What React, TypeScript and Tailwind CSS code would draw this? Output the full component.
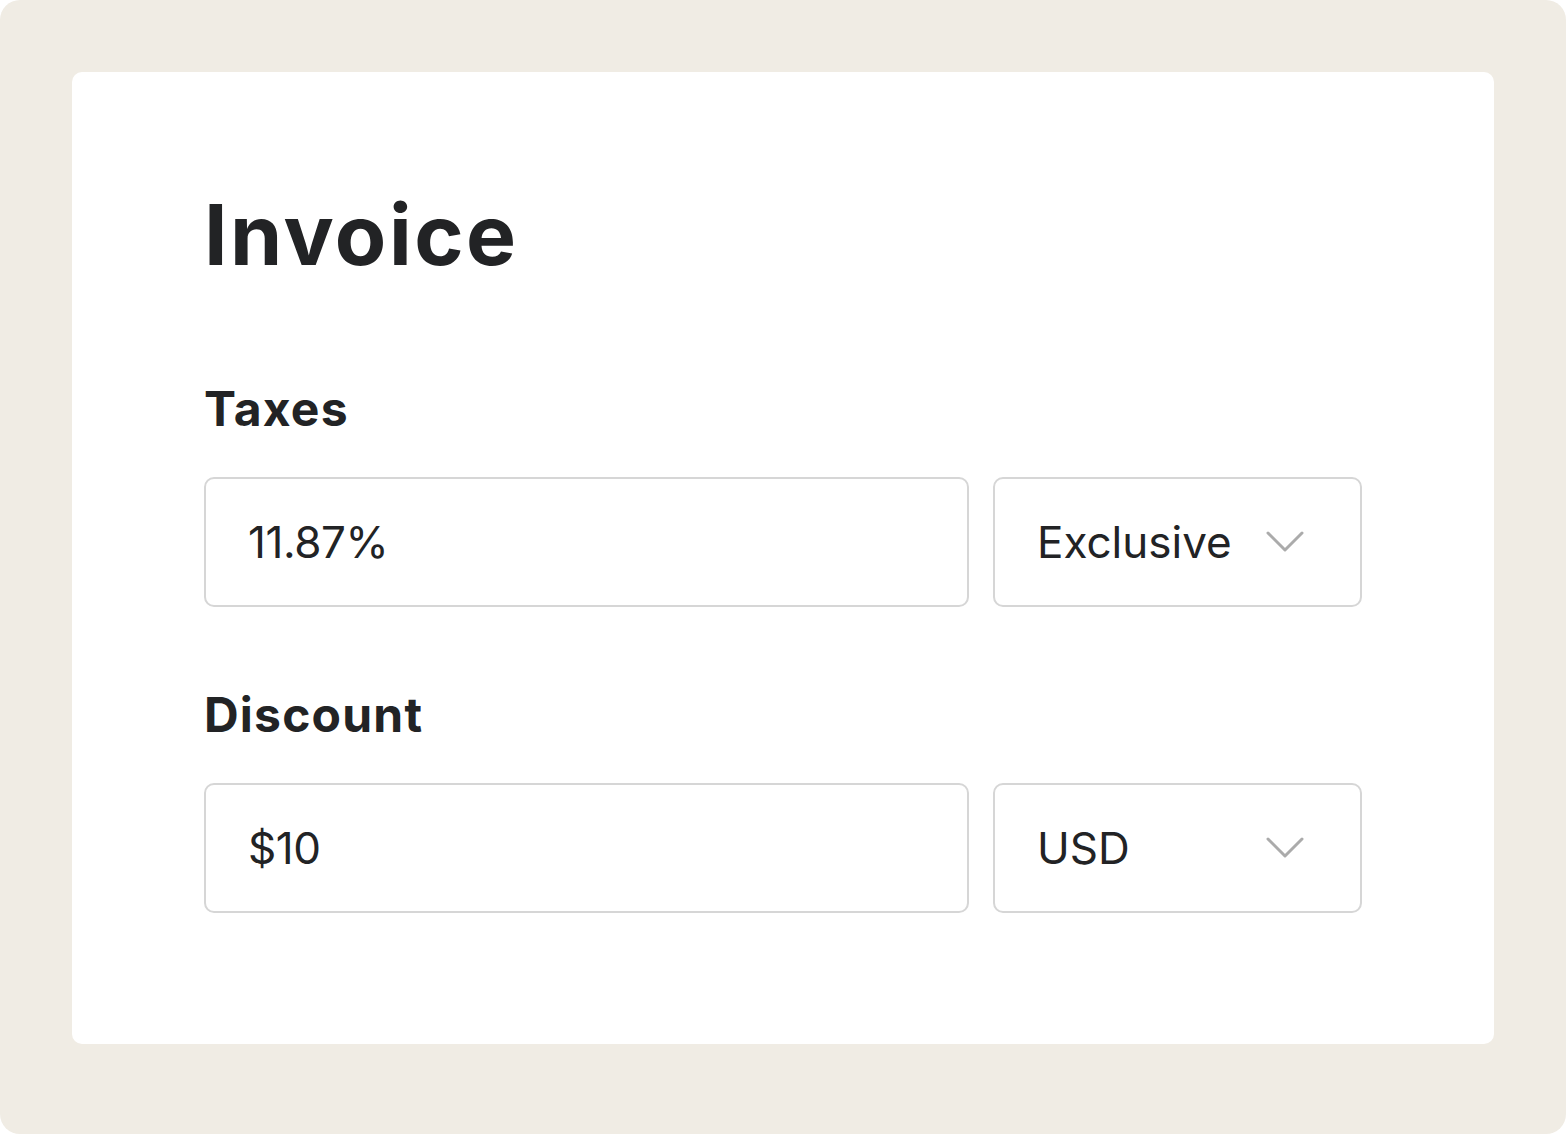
import React from "react";

type FieldProps = {
    label: string;
    value: string;
    option: string;
};

function Chevron(): JSX.Element {
    return (
        <svg
            width="38"
            height="24"
            viewBox="0 0 38 24"
            fill="none"
            stroke="#ababab"
            strokeWidth="3"
            strokeLinecap="round"
            strokeLinejoin="round"
        >
            <polyline points="2,3 19,20 36,3" />
        </svg>
    );
}

function Field({ label, value, option }: FieldProps): JSX.Element {
    return (
        <section className="flex flex-col">
            <h2 className="text-[48px] leading-none font-bold tracking-[0.025em] text-[#222325]">
                {label}
            </h2>
            <div className="mt-[44px] grid grid-cols-[1fr_369px] gap-6">
                <div className="flex h-[130px] items-center rounded-[10px] border-2 border-[#d6d6d6] bg-white px-[42px]">
                    <span className="text-[44px] leading-none tracking-[-0.01em] text-[#222325]">
                        {value}
                    </span>
                </div>
                <div className="flex h-[130px] items-center justify-between rounded-[10px] border-2 border-[#d6d6d6] bg-white pl-[42px] pr-[56px]">
                    <span className="text-[44px] leading-none text-[#222325]">
                        {option}
                    </span>
                    <Chevron />
                </div>
            </div>
        </section>
    );
}

export default function App(): JSX.Element {
    return (
        <div
            className="h-[1134px] w-[1566px] bg-white"
            style={{ fontFamily: "Inter, 'Liberation Sans', sans-serif" }}
        >
            <div className="flex h-full w-full rounded-[20px] bg-[#f0ece4] p-[72px] pb-[90px]">
                <main className="flex flex-1 flex-col rounded-[10px] bg-white px-[132px] pt-[121px]">
                    <h1 className="text-[84px] leading-none font-bold tracking-[0.03em] text-[#222325]">
                        Invoice
                    </h1>
                    <div className="mt-[108px] flex flex-col gap-[84px]">
                        <Field label="Taxes" value="11.87%" option="Exclusive" />
                        <Field label="Discount" value="$10" option="USD" />
                    </div>
                </main>
            </div>
        </div>
    );
}
